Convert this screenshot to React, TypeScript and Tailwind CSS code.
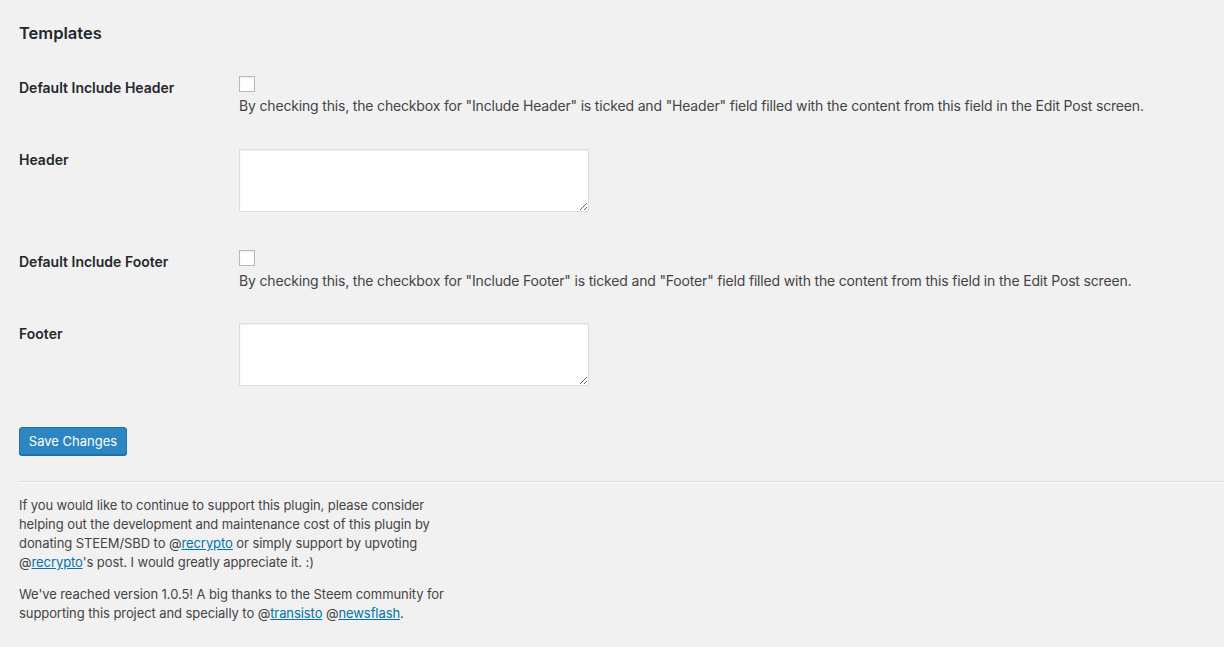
import React from "react";

const font = 'Inter, "Liberation Sans", Arial, sans-serif';

function Checkbox() {
  return (
    <div className="w-[16px] h-[16px] border border-[#b4b9be] bg-white shadow-[inset_0_1px_2px_rgba(0,0,0,0.07)]" />
  );
}

function TextArea() {
  return (
    <textarea
      className="block w-[350px] h-[63px] border border-[#dddddd] bg-white shadow-[inset_0_1px_2px_rgba(0,0,0,0.07)] outline-none"
      defaultValue=""
    />
  );
}

export default function App() {
  return (
    <div
      className="min-h-[647px] bg-[#f1f1f1] text-[#23282d] pl-[19px]"
      style={{ fontFamily: font }}
    >
      <h2 className="pt-[23px] text-[16.5px] leading-[20px] font-semibold text-[#23282d]">
        Templates
      </h2>

      {/* Row 1 */}
      <div className="flex">
        <div className="w-[220px] pt-[36px] text-[14px] leading-[18px] font-semibold">
          Default Include Header
        </div>
        <div className="pt-[33px]">
          <Checkbox />
          <p className="mt-[5px] text-[14px] leading-[18px] tracking-[-0.17px] text-[#444]">
            By checking this, the checkbox for "Include Header" is ticked and "Header" field filled with the content from this field in the Edit Post screen.
          </p>
        </div>
      </div>

      {/* Row 2 */}
      <div className="flex">
        <div className="w-[220px] pt-[36px] text-[14px] leading-[18px] font-semibold">
          Header
        </div>
        <div className="pt-[34px]">
          <TextArea />
        </div>
      </div>

      {/* Row 3 */}
      <div className="flex">
        <div className="w-[220px] pt-[41px] text-[14px] leading-[18px] font-semibold">
          Default Include Footer
        </div>
        <div className="pt-[38px]">
          <Checkbox />
          <p className="mt-[6px] text-[14px] leading-[18px] tracking-[-0.17px] text-[#444]">
            By checking this, the checkbox for "Include Footer" is ticked and "Footer" field filled with the content from this field in the Edit Post screen.
          </p>
        </div>
      </div>

      {/* Row 4 */}
      <div className="flex">
        <div className="w-[220px] pt-[35px] text-[14px] leading-[18px] font-semibold">
          Footer
        </div>
        <div className="pt-[33px]">
          <TextArea />
        </div>
      </div>

      <div className="pt-[41px]">
        <button className="h-[28px] w-[108px] rounded-[3px] bg-[#2c86c1] border border-[#1f73a8] shadow-[0_1px_0_#1f6fa3] text-white text-[13px] leading-[26px]">
          Save Changes
        </button>
      </div>

      <div className="mt-[26px] border-t border-[#dddddd] border-b border-b-[#fafafa]" />

      <div className="text-[13px] leading-[19px] tracking-[-0.08px] text-[#444]">
        <p className="mt-[13px]">
          If you would like to continue to support this plugin, please consider
          <br />
          helping out the development and maintenance cost of this plugin by
          <br />
          donating STEEM/SBD to @<a href="#" className="text-[#0073aa] underline">recrypto</a> or simply support by upvoting
          <br />
          @<a href="#" className="text-[#0073aa] underline">recrypto</a>'s post. I would greatly appreciate it. :)
        </p>
        <p className="mt-[13px]">
          We've reached version 1.0.5! A big thanks to the Steem community for
          <br />
          supporting this project and specially to @<a href="#" className="text-[#0073aa] underline">transisto</a> @<a href="#" className="text-[#0073aa] underline">newsflash</a>.
        </p>
      </div>
    </div>
  );
}
